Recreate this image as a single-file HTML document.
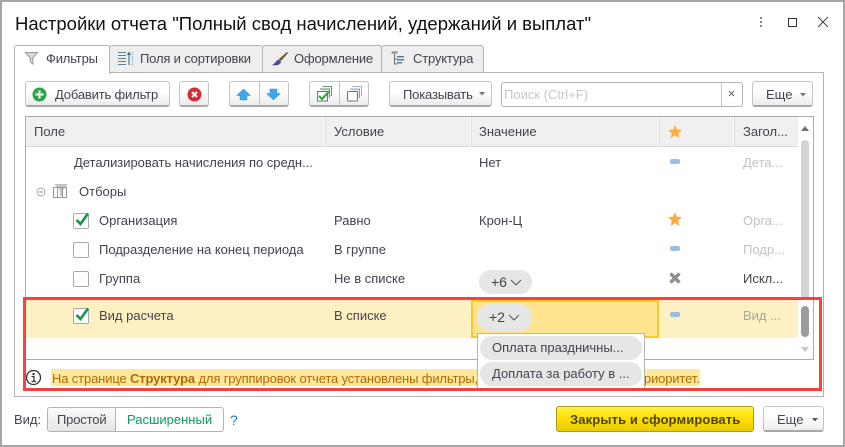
<!DOCTYPE html>
<html><head><meta charset="utf-8">
<style>
html,body{margin:0;padding:0;background:#fff}
#p{position:relative;width:845px;height:447px;overflow:hidden;background:#fff;font-family:"Liberation Sans",sans-serif;font-size:13px;color:#45424f}
#p div,#p svg{position:absolute;box-sizing:border-box}
.t{white-space:nowrap;line-height:16px;height:16px}
.n{letter-spacing:-.17px}
.tab{top:45px;height:28px;background:#eeeeee;border:1px solid #b4b4b4;border-radius:3px 3px 0 0;border-bottom:1px solid #b4b4b4}
.btn{top:81px;height:26px;background:linear-gradient(#fff 40%,#ececec);border:1px solid #c4c4c4;border-bottom:2px solid #a8a8a8;border-radius:3px}
.sep{top:117px;width:2px;height:30px;background:#fff;border-right:1px solid #dcdcdc}
.cb{left:73px;width:16px;height:16px;border:1px solid #a9a9a9;border-radius:2px;background:#fff}
.dash{left:670px;width:10px;height:5px;background:#9dbde0;border-radius:2px}
.pill{background:#e6e6e6;border-radius:13px}
.g{color:#c2c2c8}
</style></head><body><div id="p">
<div style="left:0;top:0;width:845px;height:447px;border:2px solid #a6a6a6"></div>
<div class="t" style="left:15px;top:13px;font-size:18.5px;height:22px;line-height:22px;color:#111">Настройки отчета "Полный свод начислений, удержаний и выплат"</div>
<svg style="left:759px;top:16px" width="6" height="14"><g fill="#8a8a8a"><rect x="1" y="1" width="2" height="2"/><rect x="1" y="5" width="2" height="2"/><rect x="1" y="9" width="2" height="2"/></g></svg>
<div style="left:788px;top:18px;width:9px;height:9px;border:1px solid #333"></div>
<svg style="left:817px;top:16px" width="12" height="12"><path d="M1 1L11 11M11 1L1 11" stroke="#444" stroke-width="1" fill="none"/></svg>

<div style="left:14px;top:72px;width:810px;height:325px;border:1px solid #b4b4b4"></div>
<div class="tab" style="left:109px;width:154px"></div>
<div class="tab" style="left:262px;width:120px"></div>
<div class="tab" style="left:381px;width:103px"></div>
<div class="tab" style="left:14px;width:96px;background:#fff;border-bottom:none;height:29px"></div>
<svg style="left:24px;top:51px" width="15" height="14"><path d="M1.500 1.500H13.500L8.800 7V13L6.200 11V7Z" fill="#d8d8d8" stroke="#9a9a9a"/></svg>
<div class="t n" style="left:46px;top:51px">Фильтры</div>
<svg style="left:117px;top:51px" width="17" height="15"><g stroke="#5f7f96" fill="none"><path d="M1 1.500H9M1 4.500H9M1 7.500H9M1 10.500H9M1 13.500H9"/><path d="M12 14V2M10.500 4L12 1.500L13.500 4" stroke="#3c5d78"/><path d="M15.500 1V14" stroke="#7d9cb4" stroke-dasharray="1 1"/></g></svg>
<div class="t n" style="left:140px;top:51px">Поля и сортировки</div>
<svg style="left:271px;top:51px" width="18" height="16"><path d="M16 1L8 8L10 10L17 2Z" fill="#6b5534"/><path d="M8 8.500C5 9 5 12 1 14C5 15 10 14 10 10.500Z" fill="#48508e"/></svg>
<div class="t n" style="left:294px;top:51px">Оформление</div>
<svg style="left:391px;top:51px" width="14" height="15"><g fill="none" stroke="#6d6d6d"><path d="M3.500 3V13H6M3.500 8H6"/></g><rect x="0.500" y="0.500" width="6" height="2" fill="#888"/><g fill="#4f7fa8"><rect x="6" y="5" width="7" height="1.500"/><rect x="6" y="8" width="7" height="1.500"/><rect x="6" y="11" width="5" height="1.500"/></g></svg>
<div class="t n" style="left:413px;top:51px">Структура</div>

<div class="btn" style="left:25px;width:145px"></div>
<svg style="left:32px;top:87px" width="15" height="15"><circle cx="7.500" cy="7.500" r="7" fill="#2ea44a"/><path d="M7.500 3.500V11.500M3.500 7.500H11.500" stroke="#e8f6ea" stroke-width="2.200"/></svg>
<div class="t n" style="left:55px;top:87px">Добавить фильтр</div>
<div class="btn" style="left:179px;width:30px"></div>
<svg style="left:187px;top:87px" width="15" height="15"><circle cx="7.500" cy="7.500" r="7" fill="#d92b34"/><path d="M5 5L10 10M10 5L5 10" stroke="#fff" stroke-width="2"/></svg>
<div class="btn" style="left:229px;width:60px"></div>
<div style="left:259px;top:82px;width:1px;height:24px;background:#c4c4c4"></div>
<svg style="left:236px;top:88px" width="15" height="13"><path d="M7.500 1L14.500 7.500H11V12H4V7.500H.5Z" fill="#3fa6e6" stroke="#2f8cc9" stroke-width=".5"/></svg>
<svg style="left:266px;top:88px" width="15" height="13"><path d="M7.500 12L14.500 5.500H11V1H4V5.500H.5Z" fill="#3fa6e6" stroke="#2f8cc9" stroke-width=".5"/></svg>
<div class="btn" style="left:309px;width:60px"></div>
<div style="left:339px;top:82px;width:1px;height:24px;background:#c4c4c4"></div>
<svg style="left:316px;top:86px" width="17" height="16"><path d="M6.500 .5H15.500V10" fill="none" stroke="#6c9a72"/><path d="M4 3H13.500V12" fill="#dfe9df" stroke="#6c8a86"/><rect x="1.500" y="5.500" width="10" height="9.500" fill="#fff" stroke="#5d7b8b"/><path d="M3 10L6 13L13 5.500" stroke="#36a83c" stroke-width="2.200" fill="none"/></svg>
<svg style="left:346px;top:86px" width="17" height="16"><path d="M6.500 .5H15.500V10" fill="none" stroke="#9db1bf"/><path d="M4 3H13.500V12" fill="#e4e8ec" stroke="#8ba0af"/><rect x="1.500" y="5.500" width="10" height="9.500" rx="1" fill="#fff" stroke="#5d7b8b"/></svg>
<div class="btn" style="left:389px;width:103px"></div>
<div class="t n" style="left:403px;top:87px">Показывать</div>
<svg style="left:479px;top:92px" width="6" height="4"><path d="M0 0H6L3 3.500Z" fill="#777"/></svg>
<div style="left:501px;top:82px;width:242px;height:25px;border:1px solid #b4b4b4;border-radius:3px;background:#fff"></div>
<div style="left:721px;top:83px;width:1px;height:23px;background:#c4c4c4"></div>
<div class="t" style="left:504px;top:87px;color:#c6c6cc">Поиск (Ctrl+F)</div>
<svg style="left:728px;top:90px" width="7" height="7"><path d="M1 1L6 6M6 1L1 6" stroke="#666" stroke-width="1"/></svg>
<div class="btn" style="left:752px;width:61px"></div>
<div class="t" style="left:766px;top:87px">Еще</div>
<svg style="left:800px;top:93px" width="6" height="4"><path d="M0 0H6L3 3.500Z" fill="#777"/></svg>

<div style="left:25px;top:116px;width:789px;height:244px;border:1px solid #ababab;background:#fff"></div>
<div style="left:26px;top:117px;width:772px;height:30px;background:#f0f0f0;border-bottom:1px solid #d8d8d8"></div>
<div class="sep" style="left:324px"></div><div class="sep" style="left:470px"></div><div class="sep" style="left:658px"></div><div class="sep" style="left:733px"></div>
<div class="t" style="left:34px;top:124px">Поле</div>
<div class="t" style="left:334px;top:124px">Условие</div>
<div class="t" style="left:479px;top:124px">Значение</div>
<svg style="left:668px;top:125px" width="14" height="13"><path d="M7 0L9 4.500L14 5L10.200 8.200L11.400 13L7 10.400L2.600 13L3.800 8.200L0 5L5 4.500Z" fill="#fbae40"/></svg>
<div class="t" style="left:743px;top:124px">Загол...</div>
<svg style="left:801px;top:126px" width="8" height="5"><path d="M0 5H8L4 0Z" fill="#6f6f6f"/></svg>
<div style="left:801px;top:140px;width:8px;height:160px;background:#d4d4d4;border-radius:4px 4px 0 0"></div>
<div style="left:801px;top:306px;width:8px;height:31px;background:#9c9c9c;border-radius:4px"></div>
<svg style="left:801px;top:347px" width="8" height="5"><path d="M0 0H8L4 5Z" fill="#c8c8c8"/></svg>

<div class="t" style="left:74px;top:155px;letter-spacing:-.03px">Детализировать начисления по средн...</div>
<div class="t" style="left:479px;top:155px">Нет</div>
<div class="dash" style="top:159px"></div>
<div class="t g" style="left:743px;top:155px">Дета...</div>

<svg style="left:36px;top:187px" width="10" height="10"><circle cx="5" cy="5" r="4" fill="none" stroke="#a8a8a8"/><path d="M3 5H7" stroke="#888"/></svg>
<svg style="left:52px;top:183px" width="17" height="16"><path d="M2 1H16L11 7V13H8V7Z" fill="#c4c4c4"/><g fill="none" stroke="#8f9aa3"><rect x="1.500" y="4.500" width="13" height="10"/><path d="M5.500 5V14M10.500 5V14"/></g></svg>
<div class="t" style="left:79px;top:184px">Отборы</div>

<div class="cb" style="top:213px"></div>
<svg style="left:75px;top:212px" width="15" height="14"><path d="M1.500 8L5.500 12L13 1.500" stroke="#13964a" stroke-width="2.600" fill="none"/></svg>
<div class="t" style="left:99px;top:213px">Организация</div>
<div class="t" style="left:334px;top:213px">Равно</div>
<div class="t" style="left:479px;top:213px">Крон-Ц</div>
<svg style="left:668px;top:212px" width="14" height="14"><path d="M7 0L9 4.800L14 5.300L10.200 8.600L11.400 14L7 11.100L2.600 14L3.800 8.600L0 5.300L5 4.800Z" fill="#fbae40"/></svg>
<div class="t g" style="left:743px;top:213px">Орга...</div>

<div class="cb" style="top:242px"></div>
<div class="t" style="left:99px;top:242px;letter-spacing:-.03px">Подразделение на конец периода</div>
<div class="t" style="left:334px;top:242px">В группе</div>
<div class="dash" style="top:246px"></div>
<div class="t g" style="left:743px;top:242px">Подр...</div>

<div class="cb" style="top:271px"></div>
<div class="t" style="left:99px;top:271px">Группа</div>
<div class="t" style="left:334px;top:271px">Не в списке</div>
<div class="pill" style="left:479px;top:270px;width:53px;height:24px"></div>
<div class="t" style="left:491px;top:274px;font-size:14px">+6</div>
<svg style="left:510px;top:279px" width="12" height="7"><path d="M1 1L6 6L11 1" stroke="#555" fill="none"/></svg>
<svg style="left:668px;top:271px" width="14" height="14"><path d="M2.500 2.500L11.500 11.500M11.500 2.500L2.500 11.500" stroke="#8e8e8e" stroke-width="3.400"/></svg>
<div class="t" style="left:743px;top:271px">Искл...</div>

<div style="left:26px;top:300px;width:772px;height:38px;background:#fdf1c3"></div>
<div style="left:471px;top:300px;width:188px;height:38px;background:#ffe48f;border:2px solid #fbc82a"></div>
<div class="cb" style="top:308px"></div>
<svg style="left:75px;top:307px" width="15" height="14"><path d="M1.500 8L5.500 12L13 1.500" stroke="#13964a" stroke-width="2.600" fill="none"/></svg>
<div class="t" style="left:99px;top:308px">Вид расчета</div>
<div class="t" style="left:334px;top:308px">В списке</div>
<div class="pill" style="left:477px;top:304px;width:55px;height:27px"></div>
<div class="t" style="left:489px;top:309px;font-size:14px">+2</div>
<svg style="left:508px;top:314px" width="12" height="7"><path d="M1 1L6 6L11 1" stroke="#555" fill="none"/></svg>
<div class="dash" style="top:312px"></div>
<div class="t" style="left:743px;top:308px;color:#a5a5a5">Вид ...</div>

<div style="left:51px;top:369px;width:649px;height:17px;background:#ffe79c"></div>
<svg style="left:25px;top:369px" width="17" height="17"><circle cx="8.500" cy="8.500" r="7" fill="#fff" stroke="#333" stroke-width="1.300"/><rect x="7.500" y="4" width="2" height="2" fill="#333"/><path d="M6.500 7.500H9V12M6.500 12.500H11" stroke="#333" stroke-width="1.300" fill="none"/></svg>
<div class="t" style="left:52px;top:371px;color:#b46a00;letter-spacing:-.14px">На странице <b>Структура</b> для группировок отчета установлены фильтры, которые имеют более</div>
<div class="t" style="left:637px;top:371px;color:#b46a00;letter-spacing:-.14px">приоритет.</div>

<div style="left:477px;top:333px;width:168px;height:57px;background:#fff;border:1px solid #b4b4b4"></div>
<div class="pill" style="left:480px;top:336px;width:162px;height:24px"></div>
<div class="pill" style="left:480px;top:362px;width:162px;height:24px"></div>
<div class="t" style="left:492px;top:340px">Оплата праздничны...</div>
<div class="t" style="left:492px;top:366px">Доплата за работу в ...</div>

<div style="left:23px;top:297px;width:799px;height:94px;border:3px solid #fb4040"></div>

<div class="t" style="left:14px;top:412px">Вид:</div>
<div style="left:47px;top:407px;width:177px;height:25px;border:1px solid #b4b4b4;border-radius:3px;background:#fff"></div>
<div style="left:48px;top:408px;width:68px;height:23px;background:linear-gradient(#fafafa,#e6e6e6);border-right:1px solid #b4b4b4;border-radius:2px 0 0 2px"></div>
<div class="t n" style="left:57px;top:412px">Простой</div>
<div class="t" style="left:127px;top:412px;color:#0a9a62">Расширенный</div>
<div class="t" style="left:230px;top:412px;color:#1b78c2;font-size:14px">?</div>
<div style="left:556px;top:406px;width:198px;height:26px;border:1px solid #b09a18;border-radius:3px;background:linear-gradient(#fff04a,#ffe000 45%,#e8cc00)"></div>
<div class="t" style="left:570px;top:412px;font-weight:bold;color:#4d4515;letter-spacing:.13px">Закрыть и сформировать</div>
<div class="btn" style="left:763px;top:406px;width:61px"></div>
<div class="t" style="left:777px;top:412px">Еще</div>
<svg style="left:812px;top:418px" width="6" height="4"><path d="M0 0H6L3 3.500Z" fill="#555"/></svg>
</div></body></html>
